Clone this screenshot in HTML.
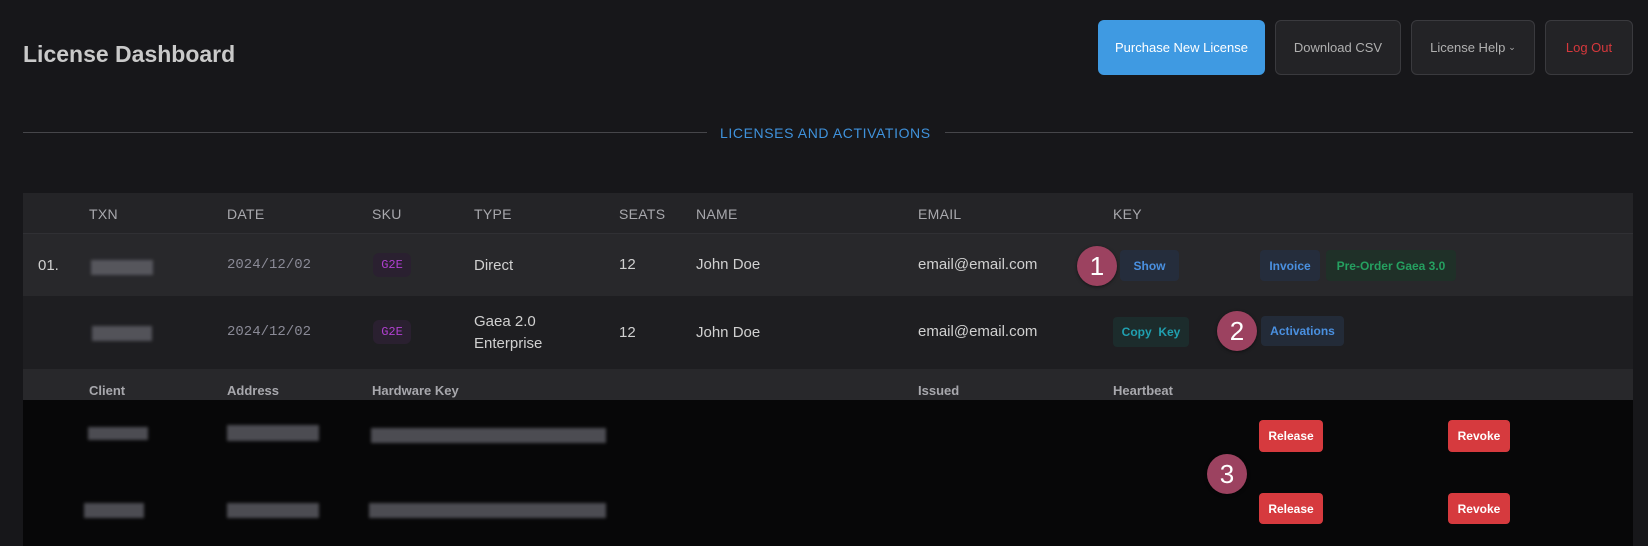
<!DOCTYPE html>
<html><head><meta charset="utf-8"><style>
*{margin:0;padding:0;box-sizing:border-box}
body{width:1648px;height:546px;background:#17171a;font-family:"Liberation Sans",sans-serif;position:relative;overflow:hidden;color:#d0d0d0}
.a{position:absolute;white-space:nowrap}
.btn{position:absolute;border-radius:6px;display:flex;align-items:center;justify-content:center;font-size:13px}
.hb{background:#232326;border:1px solid #3a3a3e;color:#b0b0b0}
.th{font-size:14px;color:#a8a8ad;letter-spacing:0.3px;top:206px}
.sh{font-size:13px;color:#a8a8ad;font-weight:bold;top:383px}
.td{font-size:15px;color:#d0d0d0}
.mono{font-family:"Liberation Mono",monospace;font-size:14px;color:#8a8a96}
.sku{position:absolute;width:38px;height:24px;border-radius:6px;background:#2a2030;color:#b040d0;font-size:12px;display:flex;align-items:center;justify-content:center;font-family:"Liberation Mono",monospace}
.sb{position:absolute;border-radius:4px;font-size:12px;font-weight:bold;display:flex;align-items:center;justify-content:center}
.circ{position:absolute;width:40px;height:40px;border-radius:50%;background:#9c4260;color:#fff;font-size:26px;display:flex;align-items:center;justify-content:center;box-shadow:0 1px 3px rgba(0,0,0,.5)}
.red{position:absolute;background:#d63a3e;color:#fff;border-radius:4px;font-size:12px;font-weight:bold;display:flex;align-items:center;justify-content:center}
.blur{position:absolute;background:#6a6a72;filter:blur(1.5px);opacity:.7}
</style></head><body>
<div class="a" style="left:23px;top:41px;font-size:23px;font-weight:bold;color:#c9c9c9">License Dashboard</div>
<div class="btn" style="left:1098px;top:20px;width:167px;height:55px;background:#3f9ae2;color:#fff">Purchase New License</div>
<div class="btn hb" style="left:1275px;top:20px;width:126px;height:55px">Download CSV</div>
<div class="btn hb" style="left:1411px;top:20px;width:124px;height:55px">License Help <span style="font-size:9px;margin-left:3px">&#8964;</span></div>
<div class="btn hb" style="left:1545px;top:20px;width:88px;height:55px;color:#d6383c">Log Out</div>
<div class="a" style="left:23px;top:132px;width:684px;height:1px;background:#46464a"></div>
<div class="a" style="left:945px;top:132px;width:688px;height:1px;background:#46464a"></div>
<div class="a" style="left:720px;top:125px;font-size:14px;color:#3f92dc;letter-spacing:0.6px">LICENSES AND ACTIVATIONS</div>

<div class="a" style="left:23px;top:193px;width:1610px;height:40px;background:#242427"></div>
<div class="a" style="left:23px;top:233px;width:1610px;height:63px;background:#28282b;border-top:1px solid #303034"></div>
<div class="a" style="left:23px;top:296px;width:1610px;height:73px;background:#1e1e21"></div>
<div class="a" style="left:23px;top:369px;width:1610px;height:31px;background:#28282b"></div>
<div class="a" style="left:23px;top:400px;width:1610px;height:146px;background:#070708"></div>

<div class="a th" style="left:89px">TXN</div>
<div class="a th" style="left:227px">DATE</div>
<div class="a th" style="left:372px">SKU</div>
<div class="a th" style="left:474px">TYPE</div>
<div class="a th" style="left:619px">SEATS</div>
<div class="a th" style="left:696px">NAME</div>
<div class="a th" style="left:918px">EMAIL</div>
<div class="a th" style="left:1113px">KEY</div>

<div class="a td" style="left:38px;top:257px">01.</div>
<div class="blur" style="left:91px;top:260px;width:62px;height:15px"></div>
<div class="a mono" style="left:227px;top:257px">2024/12/02</div>
<div class="sku" style="left:373px;top:253px">G2E</div>
<div class="a td" style="left:474px;top:257px">Direct</div>
<div class="a td" style="left:619px;top:256px">12</div>
<div class="a td" style="left:696px;top:256px">John Doe</div>
<div class="a td" style="left:918px;top:256px">email@email.com</div>
<div class="circ" style="left:1077px;top:246px">1</div>
<div class="sb" style="left:1120px;top:250px;width:59px;height:31px;background:#252d3c;color:#4a90e0">Show</div>
<div class="sb" style="left:1260px;top:250px;width:60px;height:31px;background:#252d3c;color:#4a90e0">Invoice</div>
<div class="sb" style="left:1326px;top:250px;width:130px;height:31px;background:#1f3028;color:#25a060">Pre-Order Gaea 3.0</div>

<div class="blur" style="left:92px;top:326px;width:60px;height:15px"></div>
<div class="a mono" style="left:227px;top:324px">2024/12/02</div>
<div class="sku" style="left:373px;top:320px">G2E</div>
<div class="a td" style="left:474px;top:311px;line-height:22px">Gaea 2.0<br>Enterprise</div>
<div class="a td" style="left:619px;top:324px">12</div>
<div class="a td" style="left:696px;top:324px">John Doe</div>
<div class="a td" style="left:918px;top:323px">email@email.com</div>
<div class="sb" style="left:1113px;top:317px;width:76px;height:30px;background:#1c2c2c;color:#20a0b0">Copy&nbsp; Key</div>
<div class="circ" style="left:1217px;top:311px">2</div>
<div class="sb" style="left:1261px;top:316px;width:83px;height:30px;background:#232b38;color:#4a90e0">Activations</div>

<div class="a sh" style="left:89px">Client</div>
<div class="a sh" style="left:227px">Address</div>
<div class="a sh" style="left:372px">Hardware Key</div>
<div class="a sh" style="left:918px">Issued</div>
<div class="a sh" style="left:1113px">Heartbeat</div>

<div class="blur" style="left:88px;top:427px;width:60px;height:13px"></div>
<div class="blur" style="left:227px;top:425px;width:92px;height:16px"></div>
<div class="blur" style="left:371px;top:428px;width:235px;height:15px"></div>
<div class="blur" style="left:84px;top:503px;width:60px;height:15px"></div>
<div class="blur" style="left:227px;top:503px;width:92px;height:15px"></div>
<div class="blur" style="left:369px;top:503px;width:237px;height:15px"></div>

<div class="red" style="left:1259px;top:420px;width:64px;height:32px">Release</div>
<div class="red" style="left:1448px;top:420px;width:62px;height:32px">Revoke</div>
<div class="red" style="left:1259px;top:493px;width:64px;height:31px">Release</div>
<div class="red" style="left:1448px;top:493px;width:62px;height:31px">Revoke</div>
<div class="circ" style="left:1207px;top:454px">3</div>
</body></html>
